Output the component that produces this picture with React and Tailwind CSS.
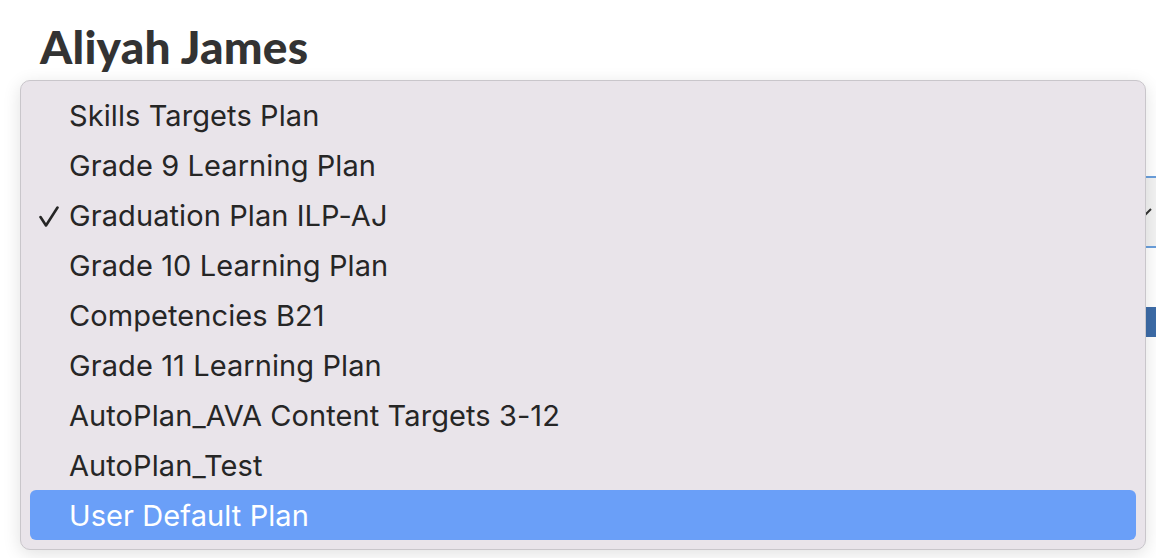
import React from "react";

const items = [
  "Skills Targets Plan",
  "Grade 9 Learning Plan",
  "Graduation Plan ILP-AJ",
  "Grade 10 Learning Plan",
  "Competencies B21",
  "Grade 11 Learning Plan",
  "AutoPlan_AVA Content Targets 3-12",
  "AutoPlan_Test",
  "User Default Plan",
];

export default function App() {
  return (
    <div className="relative w-[1156px] h-[558px] overflow-hidden bg-white">
      {/* underlying page */}
      <div className="w-[1220px] pl-[40px] pt-[21px] flex flex-col">
        <h1
          className="text-[46px] leading-[52px] font-black text-[#333333] tracking-[0.005em]"
          style={{ fontFamily: "Lato, 'Open Sans', sans-serif" }}
        >
          Aliyah James
        </h1>
        <div className="mt-[103px] h-[72px] border-y-2 border-[#6a9fdc] bg-[#f3f3f3] flex items-center justify-end pr-[68px]">
          <svg width="14" height="10" viewBox="0 0 14 10" className="text-[#333]">
            <path d="M1 2 L7 8 L13 2" fill="none" stroke="currentColor" strokeWidth="2" />
          </svg>
        </div>
        <div className="mt-[59px] h-[30px] bg-[#3d6ca8] ml-[1000px] rounded-[3px]" />
      </div>

      {/* dropdown menu overlay */}
      <div
        className="absolute left-[20px] top-[80px] w-[1126px] h-[470px] rounded-[10px] bg-[#e9e4ea] border border-[#c9c6cb] shadow-[0_4px_18px_rgba(0,0,0,0.12)] px-[9px] py-[9px] flex flex-col"
        style={{ fontFamily: "Inter, 'Noto Sans', sans-serif" }}
      >
        {items.map((t, i) => {
          const selected = i === 8;
          const checked = i === 2;
          return (
            <div
              key={t}
              className={`relative h-[50px] flex items-center pl-[39px] pt-[2px] rounded-[6px] text-[29px] tracking-[0.003em] ${
                selected ? "bg-[#6a9ff8] text-white" : "text-[#262626]"
              }`}
            >
              {checked && (
                <svg
                  className="absolute left-[9px] top-[16px]"
                  width="20"
                  height="22"
                  viewBox="0 0 20 22"
                >
                  <path
                    d="M1.5 11 L7 19.5 L18.5 1.5"
                    fill="none"
                    stroke="#262626"
                    strokeWidth="2.6"
                    strokeLinecap="round"
                    strokeLinejoin="round"
                  />
                </svg>
              )}
              {t}
            </div>
          );
        })}
      </div>
    </div>
  );
}
